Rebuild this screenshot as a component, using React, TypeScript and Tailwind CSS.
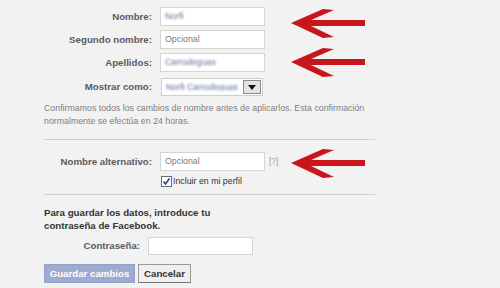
import React from "react";

function TextInput({ w = 105, h = 19, placeholder, blurred, ml = 8 }: { w?: number; h?: number; placeholder?: string; blurred?: string; ml?: number }) {
  return (
    <div
      className="bg-white border border-[#d4d4d4] flex items-center pl-[4px] text-[8.8px] leading-none"
      style={{ width: w, height: h, marginLeft: ml }}
    >
      {placeholder && <span className="text-[#7a7a7a]">{placeholder}</span>}
      {blurred && <span className="text-[#5d6f99] whitespace-nowrap blur-[0.9px]">{blurred}</span>}
    </div>
  );
}

function Label({ children, w = 108 }: { children: React.ReactNode; w?: number }) {
  return (
    <div className="text-right font-bold text-[9.7px] text-[#5c5c5c] leading-none" style={{ width: w }}>
      {children}
    </div>
  );
}

export default function App() {
  return (
    <div className="relative w-[500px] h-[288px] bg-[#f2f2f2] overflow-hidden font-['Liberation_Sans',Arial,sans-serif]">
      <div className="pl-[44px] w-[375px] pt-[7px] flex flex-col">
        <div className="flex flex-col gap-[4px]">
          <div className="flex items-center">
            <Label>Nombre:</Label>
            <TextInput blurred="Norfi" />
          </div>
          <div className="flex items-center">
            <Label>Segundo nombre:</Label>
            <TextInput placeholder="Opcional" />
          </div>
          <div className="flex items-center">
            <Label>Apellidos:</Label>
            <TextInput blurred="Carrodeguas" />
          </div>
          <div className="flex items-center mt-[2px]">
            <Label>Mostrar como:</Label>
            <div className="ml-[9px] w-[102px] h-[18px] bg-white border border-[#cfcfcf] flex items-center pl-[4px] pr-[1px] text-[8.8px] leading-none">
              <span className="flex-1 whitespace-nowrap overflow-hidden text-[#5d6f99] blur-[0.9px]">Norfi Carrodeguas</span>
              <div className="shrink-0 w-[18px] h-[14px] bg-[#e3e3e3] border border-[#8c8c8c] flex items-center justify-center">
                <svg width="8" height="5" viewBox="0 0 8 5">
                  <polygon points="0,0 8,0 4,5" fill="#111" />
                </svg>
              </div>
            </div>
          </div>
        </div>

        <p className="mt-[6px] text-[8.8px] leading-[13px] text-[#808080] w-[331px]">
          Confirmamos todos los cambios de nombre antes de aplicarlos. Esta confirmación normalmente se efectúa en 24 horas.
        </p>

        <div className="mt-[11px] h-px w-[331px] bg-[#d0d0d0]" />

        <div className="mt-[12px] flex items-center">
          <Label>Nombre alternativo:</Label>
          <TextInput placeholder="Opcional" />
          <span className="ml-[4px] text-[8.5px] text-[#a0a0a0]">[?]</span>
        </div>
        <div className="mt-[5px] flex items-center pl-[117px]">
          <svg width="11" height="11" viewBox="0 0 11 11">
            <rect x="0.5" y="0.5" width="10" height="10" fill="#fff" stroke="#6b6b6b" />
            <path d="M2.5 5.5 L4.5 8 L8.5 2.5" fill="none" stroke="#2c3f8f" strokeWidth="1.6" />
          </svg>
          <span className="ml-[1px] text-[8.8px] text-[#333333] leading-none">Incluir en mi perfil</span>
        </div>

        <div className="mt-[7px] h-px w-[331px] bg-[#d0d0d0]" />

        <p className="mt-[11px] font-bold text-[9.7px] leading-[13px] text-[#333333] w-[200px]">
          Para guardar los datos, introduce tu contraseña de Facebook.
        </p>

        <div className="mt-[5px] flex items-center">
          <Label w={96}>Contraseña:</Label>
          <TextInput h={18} />
        </div>

        <div className="mt-[9px] flex gap-[3px]">
          <div className="w-[91px] h-[19px] bg-[#9eaad0] border border-[#93a0c7] text-white font-bold text-[9.7px] flex items-center justify-center leading-none">
            Guardar cambios
          </div>
          <div className="w-[53px] h-[19px] bg-[#efefef] border border-[#999999] border-b-[#777777] text-[#333333] font-bold text-[9.7px] flex items-center justify-center leading-none">
            Cancelar
          </div>
        </div>
      </div>

      <svg className="absolute left-0 top-0 pointer-events-none" width="500" height="288" viewBox="0 0 500 288">
        {[23, 62, 163].map((c) => (
          <polygon
            key={c}
            fill="#c8161d"
            points={`291,${c} 323,${c - 14} 334,${c - 13} 311,${c - 3} 365,${c - 3} 365,${c + 3} 311,${c + 3} 334,${c + 14} 323,${c + 15}`}
          />
        ))}
      </svg>
    </div>
  );
}
